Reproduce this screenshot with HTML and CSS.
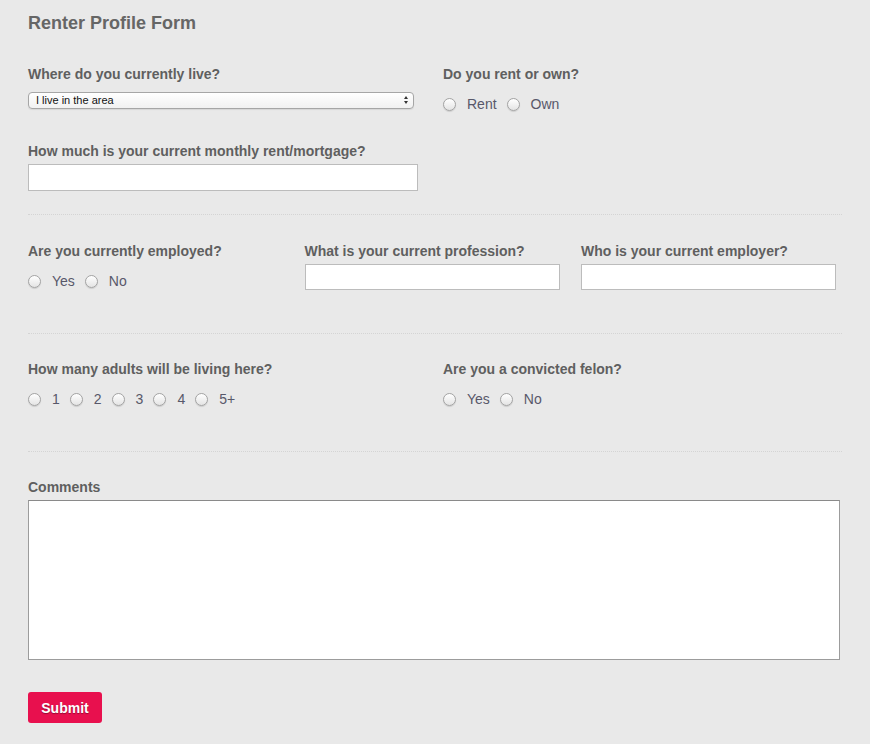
FILE: index.html
```html
<!DOCTYPE html>
<html>
<head>
<meta charset="utf-8">
<title>Renter Profile Form</title>
<link rel="stylesheet" href="styles.css">
</head>
<body>
<form class="form">
  <h1 class="title">Renter Profile Form</h1>

  <section class="section section-first">
    <div class="grid grid-2 row-a">
      <div class="field">
        <label class="label">Where do you currently live?</label>
        <div class="select-wrap">
          <select class="select">
            <option>I live in the area</option>
          </select>
        </div>
      </div>
      <div class="field">
        <label class="label">Do you rent or own?</label>
        <div class="radios">
          <label class="radio"><input type="radio" name="own"><span>Rent</span></label>
          <label class="radio"><input type="radio" name="own"><span>Own</span></label>
        </div>
      </div>
    </div>
    <div class="field">
      <label class="label">How much is your current monthly rent/mortgage?</label>
      <input class="text text-wide" type="text">
    </div>
  </section>

  <section class="section section-work">
    <div class="grid grid-3">
      <div class="field">
        <label class="label">Are you currently employed?</label>
        <div class="radios">
          <label class="radio"><input type="radio" name="emp"><span>Yes</span></label>
          <label class="radio"><input type="radio" name="emp"><span>No</span></label>
        </div>
      </div>
      <div class="field">
        <label class="label">What is your current profession?</label>
        <input class="text text-short" type="text">
      </div>
      <div class="field">
        <label class="label">Who is your current employer?</label>
        <input class="text text-short" type="text">
      </div>
    </div>
  </section>

  <section class="section">
    <div class="grid grid-2">
      <div class="field">
        <label class="label">How many adults will be living here?</label>
        <div class="radios">
          <label class="radio"><input type="radio" name="adults"><span>1</span></label>
          <label class="radio"><input type="radio" name="adults"><span>2</span></label>
          <label class="radio"><input type="radio" name="adults"><span>3</span></label>
          <label class="radio"><input type="radio" name="adults"><span>4</span></label>
          <label class="radio"><input type="radio" name="adults"><span>5+</span></label>
        </div>
      </div>
      <div class="field">
        <label class="label">Are you a convicted felon?</label>
        <div class="radios">
          <label class="radio"><input type="radio" name="felon"><span>Yes</span></label>
          <label class="radio"><input type="radio" name="felon"><span>No</span></label>
        </div>
      </div>
    </div>
  </section>

  <section class="section section-last">
    <div class="field">
      <label class="label">Comments</label>
      <textarea class="comments"></textarea>
    </div>
    <button type="button" class="submit">Submit</button>
  </section>
</form>
</body>
</html>
```

FILE: styles.css
```css
html, body {
  margin: 0;
  padding: 0;
  background: #e9e9e9;
}

body {
  font-family: "Liberation Sans", Arial, sans-serif;
  color: #606060;
}

.form {
  width: 814px;
  padding: 0 28px;
}

.title {
  margin: 12px 0 0;
  font-size: 18px;
  line-height: 22px;
  font-weight: bold;
  color: #666666;
}

.section {
  border-top: 1px dotted #d4d4d4;
  padding: 26px 0 43px;
}

.section-first {
  border-top: none;
  padding: 31px 0 23px;
}

.section-work {
  padding: 27px 0 43px;
}

.section-last {
  padding-bottom: 20px;
}

.grid {
  display: grid;
}

.grid-2 {
  grid-template-columns: 386px 1fr;
  column-gap: 29px;
}

.grid-3 {
  grid-template-columns: repeat(3, 255px);
  column-gap: 21.5px;
}

.row-a {
  margin-bottom: 29px;
}

.field {
  display: flex;
  flex-direction: column;
  align-items: flex-start;
}

.label {
  display: block;
  font-size: 14px;
  line-height: 18px;
  font-weight: bold;
  color: #5f5f5f;
  margin-bottom: 4px;
  white-space: nowrap;
}

.select-wrap {
  position: relative;
  width: 386px;
  margin-top: 5px;
}

.select {
  -webkit-appearance: none;
  appearance: none;
  display: block;
  width: 386px;
  height: 17px;
  margin: 0;
  padding: 0 0 0 7px;
  border: 1px solid #a6a6a6;
  border-radius: 4px;
  background: linear-gradient(#ffffff, #f1f1f1);
  font-family: "Liberation Sans", Arial, sans-serif;
  font-size: 11px;
  line-height: 15px;
  color: #111;
  box-shadow: 0 1px 1px rgba(0,0,0,0.08);
}

.select-wrap::before,
.select-wrap::after {
  content: "";
  position: absolute;
  right: 6px;
  width: 0;
  height: 0;
  border-left: 2.5px solid transparent;
  border-right: 2.5px solid transparent;
  pointer-events: none;
}

.select-wrap::before {
  top: 4px;
  border-bottom: 3px solid #333;
}

.select-wrap::after {
  top: 9px;
  border-top: 3px solid #333;
}

.radios {
  display: flex;
  align-items: center;
  height: 18px;
  margin-top: 8px;
}

.radio {
  display: flex;
  align-items: center;
  font-size: 14px;
  line-height: 18px;
  color: #58586a;
  margin-right: 10px;
}

.radio input {
  -webkit-appearance: none;
  appearance: none;
  width: 13px;
  height: 13px;
  margin: 0 11px 0 0;
  border: 1px solid #a3a3a3;
  border-radius: 50%;
  background: linear-gradient(#ffffff, #e4e4e4);
  box-shadow: 0 1px 1px rgba(0,0,0,0.12);
  box-sizing: border-box;
}

.text {
  display: block;
  box-sizing: border-box;
  width: 255px;
  height: 27px;
  margin: 0;
  border: 1px solid #bcbcbc;
  background: #fff;
  font-size: 14px;
  padding: 0 6px;
}

.text-short {
  height: 26px;
}

.text-wide {
  width: 390px;
}

.comments {
  display: block;
  box-sizing: border-box;
  width: 812px;
  height: 160px;
  margin: 0;
  border: 1px solid #9c9c9c;
  border-top-color: #8a8a8a;
  background: #fff;
  resize: none;
  font-size: 14px;
  padding: 4px;
}

.submit {
  display: block;
  margin-top: 32px;
  width: 74px;
  height: 31px;
  padding: 0;
  border: none;
  border-radius: 3px;
  background: #e8104e;
  color: #ffffff;
  font-family: "Liberation Sans", Arial, sans-serif;
  font-size: 14px;
  font-weight: bold;
  text-shadow: 0 1px 1px rgba(0,0,0,0.35);
  cursor: pointer;
}
```
